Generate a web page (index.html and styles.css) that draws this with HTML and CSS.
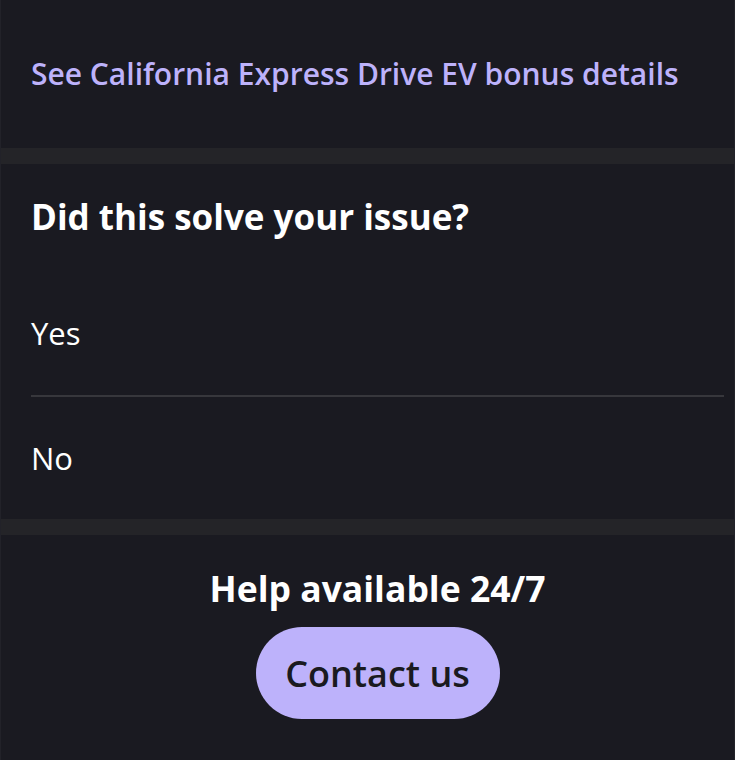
FILE: index.html
```html
<!DOCTYPE html>
<html lang="en">
<head>
<meta charset="utf-8">
<title>Help</title>
<link rel="stylesheet" href="styles.css">
</head>
<body>
  <main class="page">
    <section class="section link-section">
      <a class="details-link" href="#">See California Express Drive EV bonus details</a>
    </section>
    <div class="band"></div>
    <section class="section feedback">
      <h2 class="feedback-title">Did this solve your issue?</h2>
      <ul class="options">
        <li class="option">Yes</li>
        <li class="option">No</li>
      </ul>
    </section>
    <div class="band"></div>
    <section class="section help">
      <p class="help-title">Help available 24/7</p>
      <button class="contact-btn" type="button">Contact us</button>
    </section>
  </main>
</body>
</html>
```

FILE: styles.css
```css
* { box-sizing: border-box; }
html, body {
  margin: 0;
  padding: 0;
  background: #1a1a21;
}
body {
  font-family: "Open Sans", "Lato", sans-serif;
  color: #ffffff;
  height: 760px;
  overflow: hidden;
}
.page {
  border-left: 1px solid #222229;
  border-right: 1px solid #222229;
  min-height: 760px;
}
.section {
  padding-left: 30px;
  padding-right: 10px;
}
.link-section {
  height: 148px;
  padding-top: 56px;
}
.details-link {
  display: block;
  font-size: 30px;
  line-height: 36px;
  font-weight: 600;
  color: #bdb2fb;
  text-decoration: none;
}
.band {
  height: 16px;
  background: #242428;
}
.feedback {
  padding-top: 32px;
  padding-bottom: 1px;
}
.feedback-title {
  margin: 0 0 35px;
  font-size: 35px;
  line-height: 42px;
  font-weight: 700;
}
.options {
  list-style: none;
  margin: 0;
  padding: 0;
}
.option {
  font-size: 31px;
  line-height: 36px;
  padding: 42px 0 44px;
}
.option + .option {
  border-top: 2px solid #37373c;
  padding-top: 43px;
  padding-bottom: 42px;
}
.help {
  padding-top: 32px;
  display: flex;
  flex-direction: column;
  align-items: center;
}
.help-title {
  margin: 0 0 18px;
  font-size: 35.5px;
  line-height: 42px;
  font-weight: 700;
}
.contact-btn {
  width: 244px;
  height: 92px;
  border: none;
  border-radius: 46px;
  background: #bdb2fb;
  color: #1a1a20;
  font-family: inherit;
  font-size: 36px;
  font-weight: 600;
  cursor: pointer;
}
```
